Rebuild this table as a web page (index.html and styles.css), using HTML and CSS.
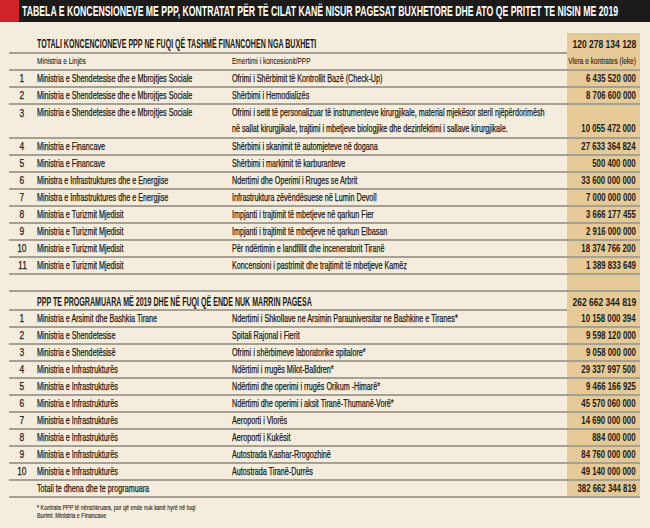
FILE: index.html
```html
<!DOCTYPE html>
<html lang="sq">
<head>
<meta charset="utf-8">
<title>Tabela e koncensioneve me PPP</title>
<link rel="stylesheet" href="styles.css">
</head>
<body>
<header class="titlebar">
  <div class="flag"></div>
  <h1><span class="t">TABELA E KONCENSIONEVE ME PPP, KONTRATAT PËR TË CILAT KANË NISUR PAGESAT BUXHETORE DHE ATO QE PRITET TE NISIN ME 2019</span></h1>
</header>
<main class="sheet">
  <section class="block">
    <div class="row head"><div class="title"><span class="t">TOTALI KONCENCIONEVE PPP NE FUQI QË TASHMË FINANCOHEN NGA BUXHETI</span></div><div class="val"><span class="t">120 278 134 128</span></div></div>
    <div class="row colhead"><div class="num"></div><div class="min"><span class="t">Ministria e Linjës</span></div><div class="name"><span class="t">Emertimi i koncesionit/PPP</span></div><div class="val"><span class="t">Vlera e kontrates (leke)</span></div></div>
    <div class="row"><div class="num"><span class="t">1</span></div><div class="min"><span class="t">Ministria e Shendetesise dhe e Mbrojtjes Sociale</span></div><div class="name"><span class="t">Ofrimi i Shërbimit të Kontrollit Bazë (Check-Up)</span></div><div class="val"><span class="t">6 435 520 000</span></div></div>
    <div class="row"><div class="num"><span class="t">2</span></div><div class="min"><span class="t">Ministria e Shendetesise dhe e Mbrojtjes Sociale</span></div><div class="name"><span class="t">Shërbimi i Hemodializës</span></div><div class="val"><span class="t">8 706 600 000</span></div></div>
    <div class="row tall"><div class="num"><span class="t">3</span></div><div class="min"><span class="t">Ministria e Shendetesise dhe e Mbrojtjes Sociale</span></div><div class="name"><span class="t">Ofrimi i setit të personalizuar të instrumenteve kirurgjikale, material mjekësor steril njëpërdorimësh<br>në sallat kirurgjikale, trajtimi i mbetjeve biologjike dhe dezinfektimi i sallave kirurgjikale.</span></div><div class="val"><span class="t">10 055 472 000</span></div></div>
    <div class="row"><div class="num"><span class="t">4</span></div><div class="min"><span class="t">Ministria e Financave</span></div><div class="name"><span class="t">Shërbimi i skanimit të automjeteve në dogana</span></div><div class="val"><span class="t">27 633 364 824</span></div></div>
    <div class="row"><div class="num"><span class="t">5</span></div><div class="min"><span class="t">Ministria e Financave</span></div><div class="name"><span class="t">Shërbimi i markimit të karburanteve</span></div><div class="val"><span class="t">500 400 000</span></div></div>
    <div class="row"><div class="num"><span class="t">6</span></div><div class="min"><span class="t">Ministra e Infrastruktures dhe e Energjise</span></div><div class="name"><span class="t">Ndertimi dhe Operimi i Rruges se Arbrit</span></div><div class="val"><span class="t">33 600 000 000</span></div></div>
    <div class="row"><div class="num"><span class="t">7</span></div><div class="min"><span class="t">Ministra e Infrastruktures dhe e Energjise</span></div><div class="name"><span class="t">Infrastruktura zëvëndësuese në Lumin Devoll</span></div><div class="val"><span class="t">7 000 000 000</span></div></div>
    <div class="row"><div class="num"><span class="t">8</span></div><div class="min"><span class="t">Ministria e Turizmit Mjedisit</span></div><div class="name"><span class="t">Impjanti i trajtimit të mbetjeve në qarkun Fier</span></div><div class="val"><span class="t">3 666 177 455</span></div></div>
    <div class="row"><div class="num"><span class="t">9</span></div><div class="min"><span class="t">Ministria e Turizmit Mjedisit</span></div><div class="name"><span class="t">Impjanti i trajtimit të mbetjeve në qarkun Elbasan</span></div><div class="val"><span class="t">2 916 000 000</span></div></div>
    <div class="row"><div class="num"><span class="t">10</span></div><div class="min"><span class="t">Ministria e Turizmit Mjedisit</span></div><div class="name"><span class="t">Për ndërtimin e landfillit dhe inceneratorit Tiranë</span></div><div class="val"><span class="t">18 374 766 200</span></div></div>
    <div class="row"><div class="num"><span class="t">11</span></div><div class="min"><span class="t">Ministria e Turizmit Mjedisit</span></div><div class="name"><span class="t">Koncensioni i pastrimit dhe trajtimit të mbetjeve Kamëz</span></div><div class="val"><span class="t">1 389 833 649</span></div></div>
    <div class="row gap"><div class="num"></div><div class="min"></div><div class="name"></div><div class="val"></div></div>
  </section>
  <section class="block">
    <div class="row head second"><div class="title"><span class="t">PPP TE PROGRAMUARA MË 2019 DHE NË FUQI QË ENDE NUK MARRIN PAGESA</span></div><div class="val"><span class="t">262 662 344 819</span></div></div>
    <div class="row"><div class="num"><span class="t">1</span></div><div class="min"><span class="t">Ministria e Arsimit dhe Bashkia Tirane</span></div><div class="name"><span class="t">Ndertimi i Shkollave ne Arsimin Parauniversitar ne Bashkine e Tiranes*</span></div><div class="val"><span class="t">10 158 000 394</span></div></div>
    <div class="row"><div class="num"><span class="t">2</span></div><div class="min"><span class="t">Ministria e Shendetesise</span></div><div class="name"><span class="t">Spitali Rajonal i Fierit</span></div><div class="val"><span class="t">9 598 120 000</span></div></div>
    <div class="row"><div class="num"><span class="t">3</span></div><div class="min"><span class="t">Ministria e Shendetësisë</span></div><div class="name"><span class="t">Ofrimi i shërbimeve laboratorike spitalore*</span></div><div class="val"><span class="t">9 058 000 000</span></div></div>
    <div class="row"><div class="num"><span class="t">4</span></div><div class="min"><span class="t">Ministria e Infrastrukturës</span></div><div class="name"><span class="t">Ndërtimi i rrugës Milot-Balldren*</span></div><div class="val"><span class="t">29 337 997 500</span></div></div>
    <div class="row"><div class="num"><span class="t">5</span></div><div class="min"><span class="t">Ministria e Infrastrukturës</span></div><div class="name"><span class="t">Ndërtimi dhe operimi i rrugës Orikum -Himarë*</span></div><div class="val"><span class="t">9 466 166 925</span></div></div>
    <div class="row"><div class="num"><span class="t">6</span></div><div class="min"><span class="t">Ministria e Infrastrukturës</span></div><div class="name"><span class="t">Ndërtimi dhe operimi i aksit Tiranë-Thumanë-Vorë*</span></div><div class="val"><span class="t">45 570 060 000</span></div></div>
    <div class="row"><div class="num"><span class="t">7</span></div><div class="min"><span class="t">Ministria e Infrastrukturës</span></div><div class="name"><span class="t">Aeroporti i Vlorës</span></div><div class="val"><span class="t">14 690 000 000</span></div></div>
    <div class="row"><div class="num"><span class="t">8</span></div><div class="min"><span class="t">Ministria e Infrastrukturës</span></div><div class="name"><span class="t">Aeroporti i Kukësit</span></div><div class="val"><span class="t">884 000 000</span></div></div>
    <div class="row"><div class="num"><span class="t">9</span></div><div class="min"><span class="t">Ministria e Infrastrukturës</span></div><div class="name"><span class="t">Autostrada Kashar-Rrogozhinë</span></div><div class="val"><span class="t">84 760 000 000</span></div></div>
    <div class="row"><div class="num"><span class="t">10</span></div><div class="min"><span class="t">Ministria e Infrastrukturës</span></div><div class="name"><span class="t">Autostrada Tiranë-Durrës</span></div><div class="val"><span class="t">49 140 000 000</span></div></div>
    <div class="row total"><div class="num"></div><div class="min"><span class="t">Totali te dhena dhe te programuara</span></div><div class="name"></div><div class="val"><span class="t">382 662 344 819</span></div></div>
  </section>
  <footer class="notes">
    <p><span class="t">* Kontrata PPP të nënshkruara, por që ende nuk kanë hyrë në fuqi</span></p>
    <p><span class="t">Burimi: Ministria e Financave</span></p>
  </footer>
</main>
</body>
</html>
```

FILE: styles.css
```css
html, body {
  margin: 0;
  padding: 0;
}
body {
  width: 650px;
  height: 528px;
  overflow: hidden;
  background: #f4ecdc;
  color: #1f1b16;
  font-family: "Liberation Sans", Arial, sans-serif;
}

/* condensed lettering: the text keeps its font but is narrowed */
.t {
  display: inline-block;
  white-space: nowrap;
  transform-origin: left center;
  transform: scaleX(var(--sx, 0.72));
  -webkit-text-stroke: 0.25px currentColor;
}

.titlebar {
  display: flex;
  height: 22px;
  background: #1d1b1a;
  overflow: hidden;
}
.titlebar .flag {
  width: 19px;
  flex: none;
  background: #cf2229;
}
.titlebar h1 {
  margin: 0 0 0 3px;
  font-size: 14px;
  line-height: 22px;
  font-weight: bold;
  color: #ffffff;
  white-space: nowrap;
  --sx: 0.622;
}
.titlebar h1 .t {
  -webkit-text-stroke: 0;
}

.sheet {
  padding: 11px 10px 0 9px;
}

.row {
  display: grid;
  grid-template-columns: 26px 193px 339px 73px;
  height: 15px;
  line-height: 15px;
  font-size: 10px;
  border-bottom: 2px solid #a6a093;
  white-space: nowrap;
}
.num {
  text-align: center;
  font-size: 10.5px;
  --sx: 0.8;
}
.num .t {
  transform-origin: center center;
}
.min {
  padding-left: 2px;
}
.name {
  padding-left: 4px;
}
.val {
  display: flex;
  justify-content: flex-end;
  background: #e5ca98;
  padding-right: 4px;
  font-weight: bold;
  font-size: 10px;
  --sx: 0.78;
}
.val .t {
  transform-origin: right center;
  -webkit-text-stroke: 0;
}

.row.head {
  height: 19px;
  line-height: 23px;
}
.row.head .title {
  grid-column: 1 / 4;
  padding-left: 28px;
  font-size: 12px;
  font-weight: bold;
  --sx: 0.59;
}
.row.head .title .t {
  -webkit-text-stroke: 0;
}
.row.head .val {
  font-size: 11.5px;
  --sx: 0.74;
}
.row.colhead {
  font-size: 8.5px;
  --sx: 0.77;
}
.row.colhead .t {
  -webkit-text-stroke: 0.1px currentColor;
}
.row.colhead .val {
  font-size: 8.5px;
  font-weight: normal;
  --sx: 0.77;
}
.row.tall {
  height: 32px;
  line-height: 16px;
}
.row.tall .val {
  align-items: flex-end;
}
.row.tall .val .t {
  line-height: 16px;
}
.row.head.second {
  height: 17px;
  line-height: 20px;
}

.notes {
  padding: 6px 0 0 28px;
  font-size: 6.5px;
  line-height: 8px;
  --sx: 0.83;
}
.notes .t {
  -webkit-text-stroke: 0.1px currentColor;
}
.notes p {
  margin: 0;
}
```
